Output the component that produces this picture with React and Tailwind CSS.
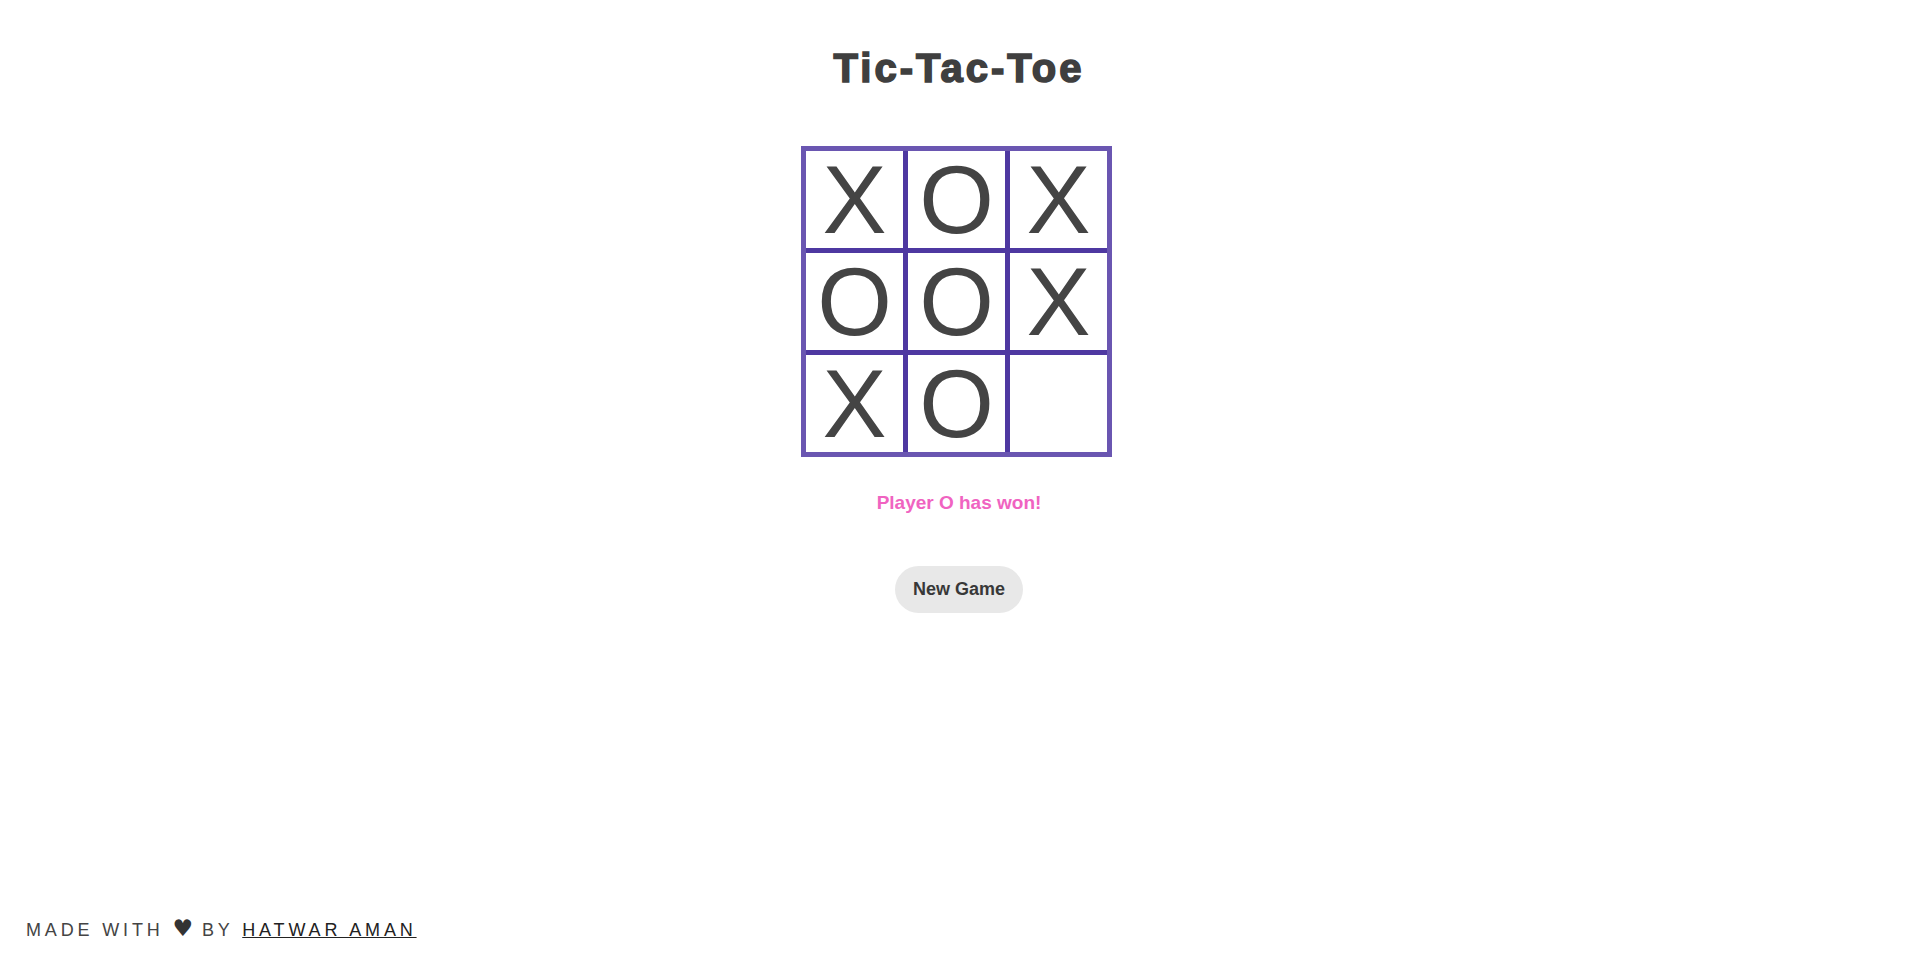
import React, { useState } from 'react';

const START = ['X', 'O', 'X', 'O', 'O', 'X', 'X', 'O', null];

function Square({ value, onClick }) {
    return (
        <button
            onClick={onClick}
            className="w-[97px] h-[97px] bg-white flex items-center justify-center text-[96px] leading-normal text-[#444444] cursor-pointer"
        >
            {value}
        </button>
    );
}

export default function App() {
    const [squares, setSquares] = useState(START);

    return (
        <div className="min-h-screen flex flex-col bg-white font-['Liberation_Sans',Arial,sans-serif]">
            <main className="flex flex-col items-center pt-[48px]">
                <h1 className="text-[40px] leading-[40px] font-bold tracking-[3px] text-[#3f3f3f] [-webkit-text-stroke:1.6px_#3f3f3f]">
                    Tic-Tac-Toe
                </h1>

                <div className="mt-[58px] mr-[5px] grid grid-cols-3 gap-[5px] bg-[#4e38a1] border-[5px] border-[#6a56b1]">
                    {squares.map((v, i) => (
                        <Square key={i} value={v} onClick={() => {}} />
                    ))}
                </div>

                <p className="mt-[35px] text-[19px] leading-[22px] font-bold text-[#f063c1]">
                    Player O has won!
                </p>

                <button
                    onClick={() => setSquares(Array(9).fill(null))}
                    className="mt-[52px] px-[18px] py-[13px] text-[18px] leading-[21px] font-bold text-[#383838] bg-[#e8e8e8] rounded-full"
                >
                    New Game
                </button>
            </main>

            <footer className="mt-auto px-[26px] pb-[24px] text-[18px] leading-[21px] tracking-[3.85px] text-[#444444]">
                MADE WITH{' '}
                <span className="font-['DejaVu_Sans',sans-serif] text-[23px] leading-[21px] tracking-normal text-[#333333]">♥</span>
                {' '}BY{' '}
                <a href="#" className="underline text-[#222222]">HATWAR AMAN</a>
            </footer>
        </div>
    );
}
